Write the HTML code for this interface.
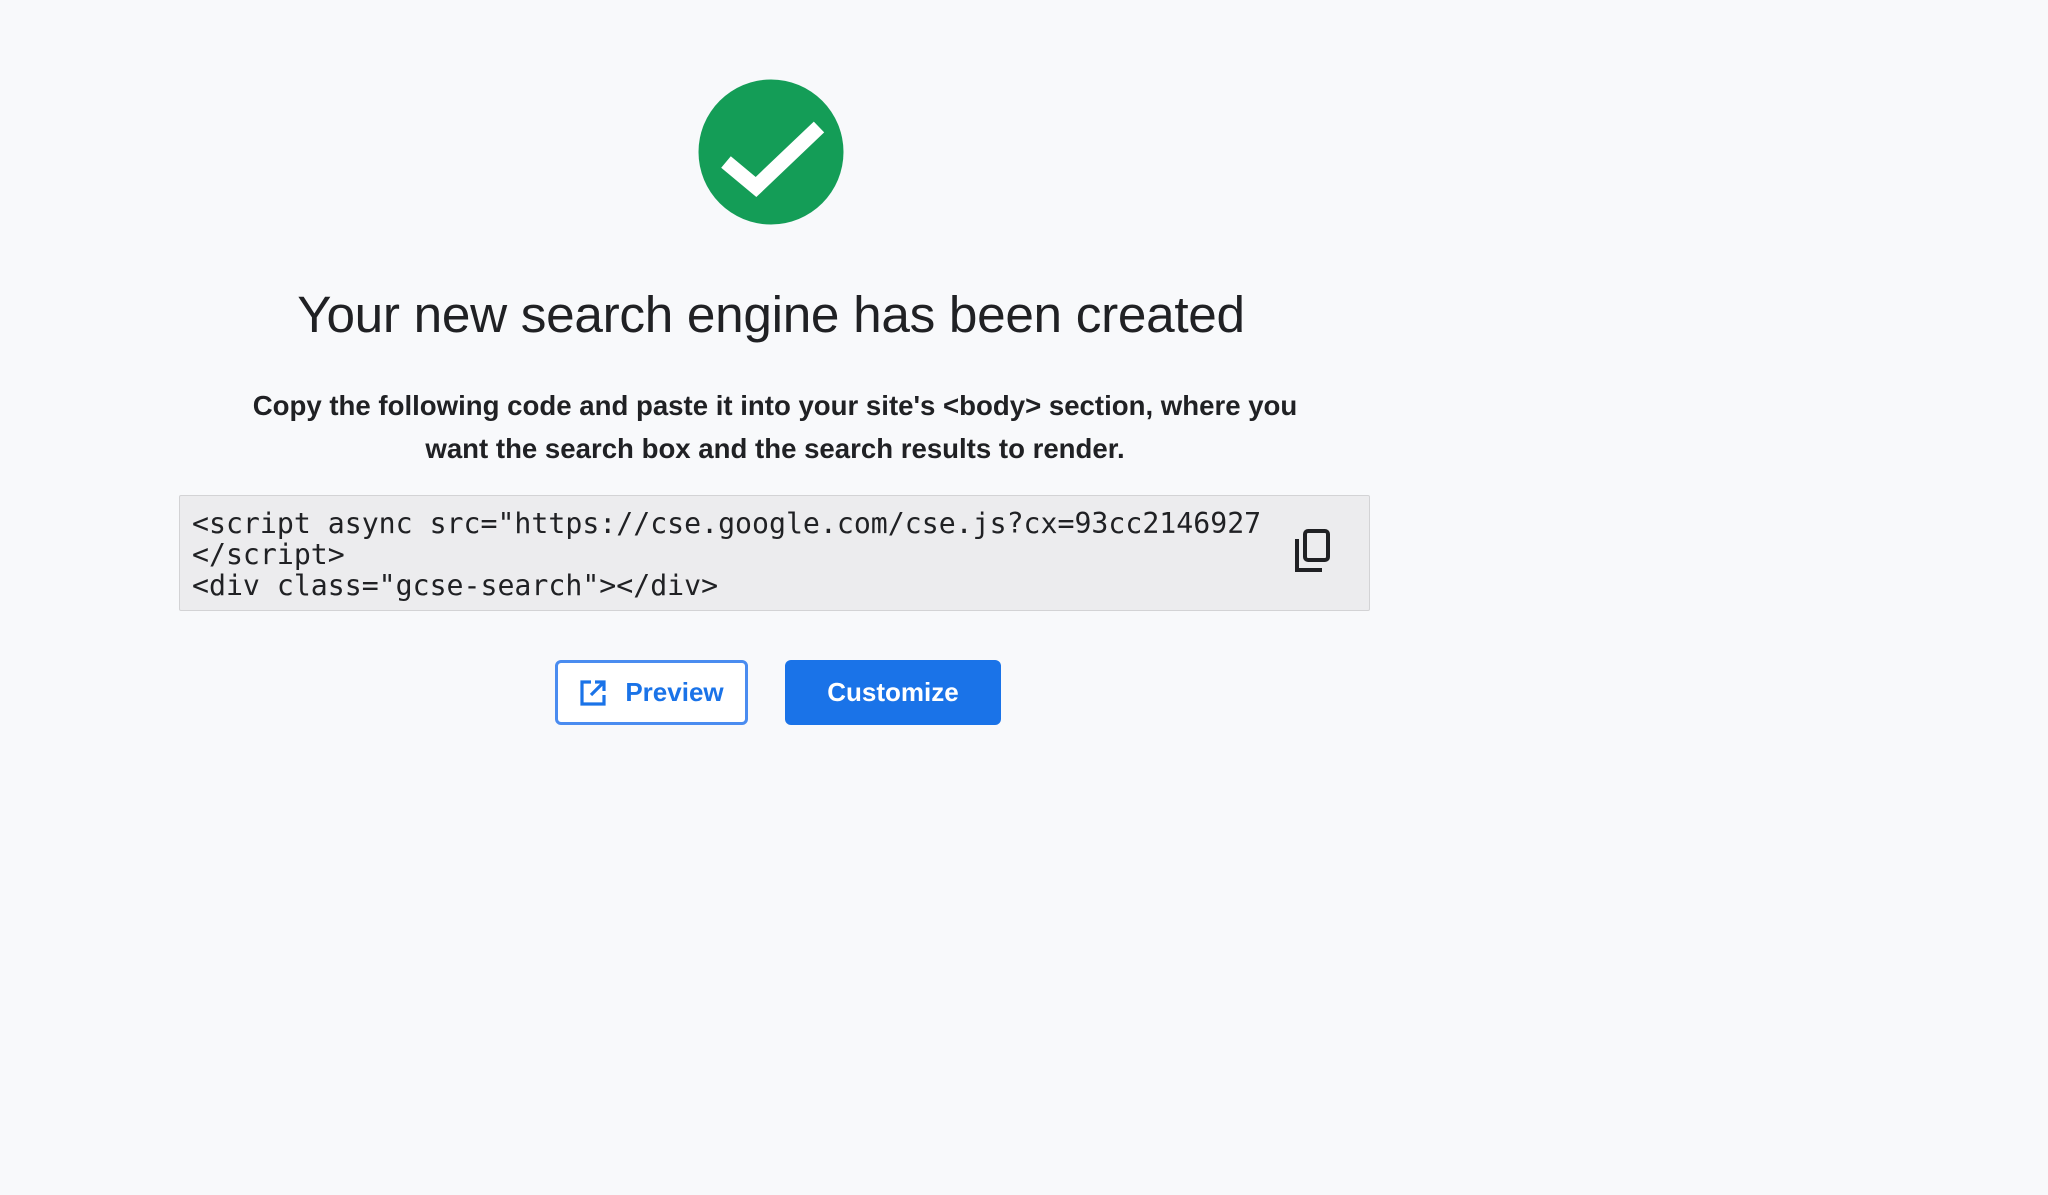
<!DOCTYPE html>
<html><head><meta charset="utf-8"><style>
html,body{margin:0;padding:0;width:2048px;height:1195px;background:#f8f9fb;overflow:hidden}
body{position:relative;font-family:"Liberation Sans",sans-serif}
h1{position:absolute;top:285px;left:0;width:1542px;text-align:center;margin:0;font-weight:400;font-size:51.3px;color:#202124;letter-spacing:-0.3px}
p{position:absolute;top:384px;left:230px;width:1090px;margin:0;text-align:center;font-weight:700;font-size:27.6px;line-height:43px;color:#202124}
.code{position:absolute;left:179px;top:495px;width:1189px;height:114px;background:#ececee;border:1px solid #d3d3d5;border-radius:2px}
pre{position:absolute;left:12px;top:12px;margin:0;width:1071px;overflow:hidden;font-family:"DejaVu Sans Mono","Liberation Mono",monospace;font-size:28.2px;line-height:31px;color:#202124}
.btn{position:absolute;top:660px;height:65px;box-sizing:border-box;border-radius:6px;font-size:26px;font-weight:700;display:flex;align-items:center;justify-content:center}
</style></head><body>
<svg style="position:absolute;left:698px;top:79px" width="146" height="146" viewBox="0 0 146 146"><circle cx="73" cy="73" r="72.5" fill="#149d57"/><path d="M28 83 L58 108 L121 48" fill="none" stroke="#fff" stroke-width="15"/></svg>
<h1>Your new search engine has been created</h1>
<p>Copy the following code and paste it into your site's &lt;body&gt; section, where you want the search box and the search results to render.</p>
<div class="code"><pre>&lt;script async src="https://cse.google.com/cse.js?cx=93cc2146927'&gt;
&lt;/script&gt;
&lt;div class="gcse-search"&gt;&lt;/div&gt;</pre>
<svg style="position:absolute;left:1114px;top:33px" width="44" height="44" viewBox="0 0 44 44"><rect x="11" y="2" width="23" height="29" rx="3" fill="none" stroke="#202124" stroke-width="4"/><path d="M3 10 V41 H28" fill="none" stroke="#202124" stroke-width="4"/></svg>
</div>
<div class="btn" style="left:555px;width:193px;border:3px solid #4a8cf0;background:#fff;color:#1a73e8">
<svg width="28" height="28" viewBox="0 0 28 28" style="margin-right:18px"><path d="M12 3 H3 V25 H25 V16" fill="none" stroke="#1a73e8" stroke-width="3.2"/><path d="M16 3 H25 V12 M25 3 L12 16" fill="none" stroke="#1a73e8" stroke-width="3.2"/></svg>Preview</div>
<div class="btn" style="left:785px;width:216px;background:#1a73e8;color:#fff">Customize</div>
</body></html>
